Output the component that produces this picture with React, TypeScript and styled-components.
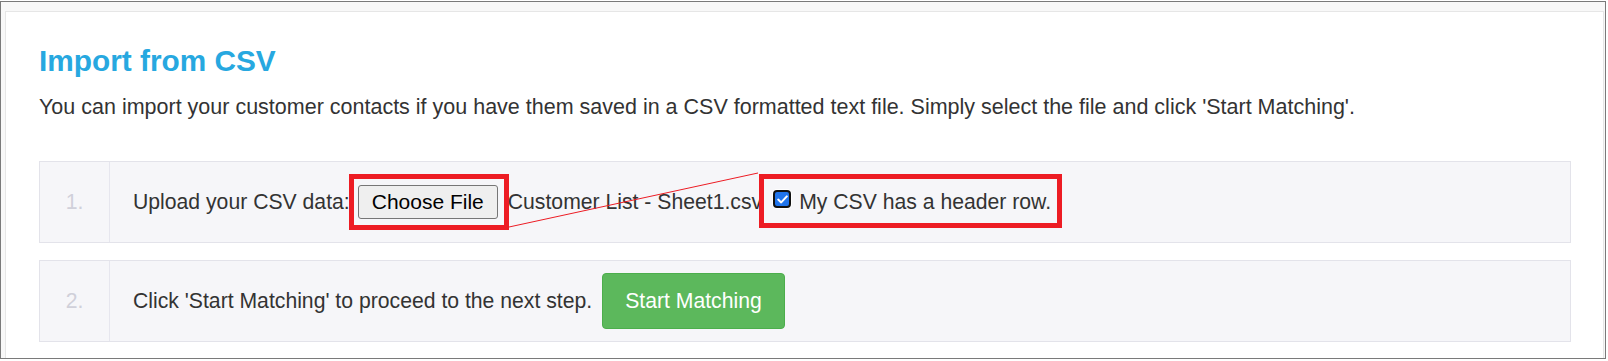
import React from 'react';
import styled, { createGlobalStyle } from 'styled-components';

const GlobalStyle = createGlobalStyle`
  html, body {
    margin: 0;
    padding: 0;
    background: #ffffff;
  }
  body {
    font-family: "Liberation Sans", Arial, sans-serif;
    color: #333333;
  }
  * {
    box-sizing: border-box;
  }
`;

const Frame = styled.div`
  margin-top: 1px;
  width: 1606px;
  height: 358px;
  border: 1px solid #7a7a7a;
  background: #f8f8f8;
  padding: 9px 1px 0 4px;
  display: flex;
  overflow: hidden;
`;

const Panel = styled.div`
  flex: 1;
  background: #ffffff;
  border: 1px solid #e6e6e6;
  border-bottom: none;
  padding: 32px 32px 0 33px;
`;

const Title = styled.h1`
  margin: 0 0 17px;
  font-size: 29.8px;
  line-height: 34px;
  font-weight: 700;
  color: #27a8e0;
`;

const Intro = styled.p`
  margin: 0 0 42px;
  font-size: 21.5px;
  line-height: 24px;
  color: #333333;
`;

const Steps = styled.div`
  display: flex;
  flex-direction: column;
  gap: 17px;
`;

const Step = styled.div`
  position: relative;
  display: flex;
  height: 82px;
  border: 1px solid #e3e3ea;
  background: #f6f6f9;
`;

const StepNumber = styled.div`
  width: 70px;
  flex-shrink: 0;
  border-right: 1px solid #e6e6ee;
  display: flex;
  align-items: center;
  justify-content: center;
  font-size: 21.2px;
  color: #d0d0da;
`;

const StepBody = styled.div`
  display: flex;
  align-items: center;
  padding-left: 23px;
  font-size: 21.2px;
  line-height: 24px;
  color: #333333;
  white-space: nowrap;
`;

const Highlight = styled.span<{ $inset: string }>`
  position: relative;
  display: inline-flex;
  align-items: center;

  &::after {
    content: '';
    position: absolute;
    inset: ${(p) => p.$inset};
    border: 5px solid #ed1c24;
    pointer-events: none;
  }
`;

const FileButton = styled.button`
  margin-left: 8px;
  height: 34px;
  padding: 0 13px;
  border: 1px solid #767676;
  border-radius: 3px;
  background: #efefef;
  color: #000000;
  font-family: inherit;
  font-size: 21px;
  cursor: pointer;
`;

const FileName = styled.span`
  margin-left: 10px;
`;

const Check = styled.span`
  width: 18px;
  height: 18px;
  margin: 0 8px 6px 11px;
  border: 2.5px solid #111111;
  border-radius: 4px;
  background: #1f74ec;
  box-shadow: 0 0 0 1px #ffffff;
  display: inline-flex;
  align-items: center;
  justify-content: center;
`;

const GreenButton = styled.button`
  margin-left: 10px;
  height: 56px;
  padding: 0 22px;
  border: 1px solid #4cae4c;
  border-radius: 4px;
  background: #5cb85c;
  color: #ffffff;
  font-family: inherit;
  font-size: 21.2px;
  cursor: pointer;
`;

const Connector = styled.svg`
  position: absolute;
  left: 0;
  top: 0;
  width: 100%;
  height: 100%;
  overflow: visible;
  pointer-events: none;
`;

const App: React.FC = () => {
  return (
    <>
      <GlobalStyle />
      <Frame>
        <Panel>
          <Title>Import from CSV</Title>
          <Intro>
            You can import your customer contacts if you have them saved in a CSV formatted text
            file. Simply select the file and click 'Start Matching'.
          </Intro>

          <Steps>
            <Step>
              <StepNumber>1.</StepNumber>
              <StepBody>
                Upload your CSV data:
                <Highlight $inset="-11px -11px -11px -1px">
                  <FileButton type="button">Choose File</FileButton>
                </Highlight>
                <FileName>Customer List - Sheet1.csv</FileName>
                <Highlight $inset="-16px -11px -14px -3px">
                  <Check>
                    <svg width="11" height="9" viewBox="0 0 11 9">
                      <path
                        d="M1.2 4.6 L4.2 7.4 L9.8 1.4"
                        fill="none"
                        stroke="#ffffff"
                        strokeWidth="2"
                        strokeLinecap="round"
                        strokeLinejoin="round"
                      />
                    </svg>
                  </Check>
                  My CSV has a header row.
                </Highlight>
              </StepBody>
              <Connector>
                <line x1="469" y1="65" x2="718" y2="11" stroke="#ed1c24" strokeWidth="1" />
              </Connector>
            </Step>

            <Step>
              <StepNumber>2.</StepNumber>
              <StepBody>
                Click 'Start Matching' to proceed to the next step.
                <GreenButton type="button">Start Matching</GreenButton>
              </StepBody>
            </Step>
          </Steps>
        </Panel>
      </Frame>
    </>
  );
};

export default App;
